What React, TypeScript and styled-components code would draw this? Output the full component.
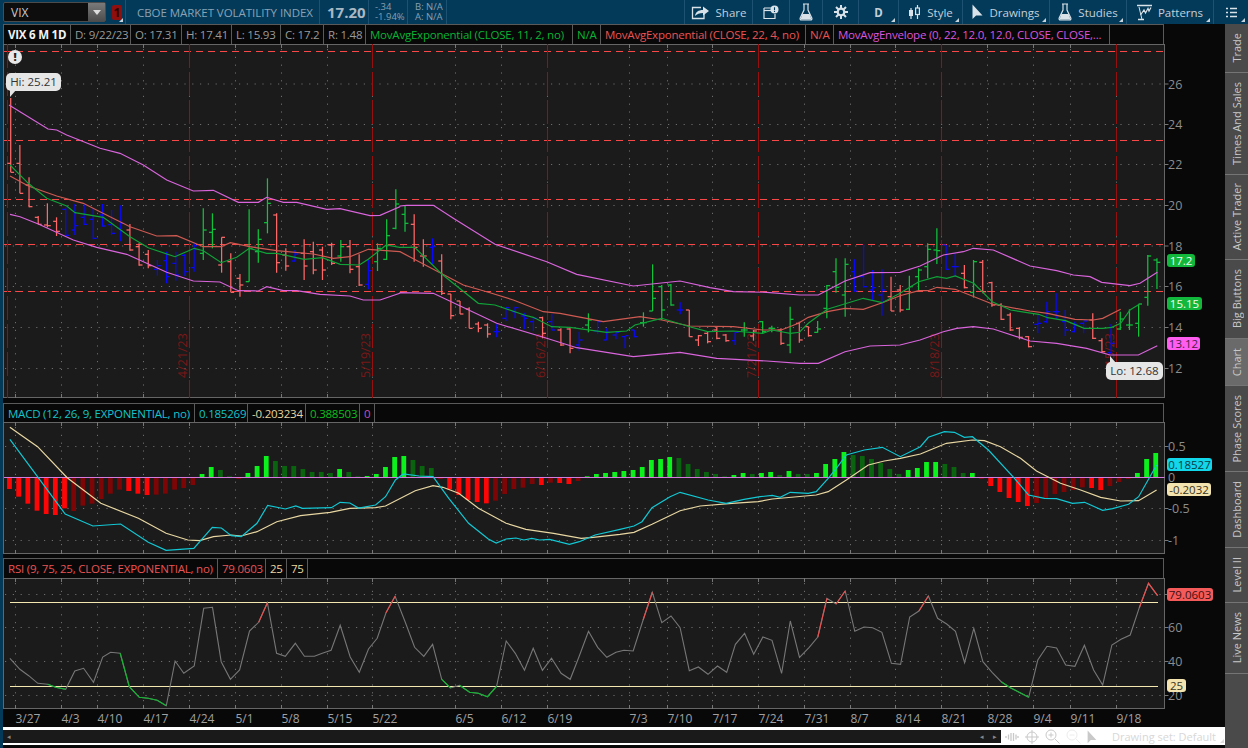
import React from "react";
import styled, { createGlobalStyle } from "styled-components";

const FONT = '"Open Sans", "Noto Sans", "Liberation Sans", sans-serif';

const Global = createGlobalStyle`
  html, body { margin: 0; padding: 0; background: #033a5a; overflow: hidden; }
  * { box-sizing: border-box; }
`;

const Page = styled.div`
  width: 1248px; height: 748px; display: flex; flex-direction: column;
  background: #033a5a; font-family: ${FONT}; font-size: 12px; color: #aaa; overflow: hidden;
`;
const TopBar = styled.header`
  height: 24px; display: flex; align-items: stretch; padding-left: 3px; flex: none; background: #033a5a;
`;
const SymbolBox = styled.div`
  width: 103px; height: 20px; margin-top: 2px; background: #0d0d0d; border: 1px solid #4c4c4c; border-radius: 2px;
  display: flex; align-items: center; justify-content: space-between; padding-left: 7px; color: #c9c9c9; font-size: 12px;
`;
const DropButton = styled.span`
  width: 17px; height: 18px; background: linear-gradient(#7a7a7a, #4d4d4d); display: flex; align-items: center; justify-content: center;
  &::after { content: ""; border-left: 4px solid transparent; border-right: 4px solid transparent; border-top: 5px solid #ddd; }
`;
const LinkCell = styled.div`
  width: 20px; position: relative; display: flex; align-items: center; padding-left: 6px; border-right: 1px solid #1d5273;
  &::after { content: ""; position: absolute; right: 2px; bottom: 2px; border-left: 4px solid transparent; border-bottom: 4px solid #c8d4dc; }
`;
const LinkBadge = styled.span`
  width: 10px; height: 15px; background: #8f0f0f; border-radius: 2px; color: #2a0505; font-size: 12px; font-weight: 700;
  display: flex; align-items: center; justify-content: center;
`;
const InfoCell = styled.div<{ $w: number; $pl: number }>`
  width: ${(p) => p.$w}px; padding-left: ${(p) => p.$pl}px; border-right: 1px solid #1d5273; display: flex; flex-direction: column; justify-content: center; flex: none; white-space: nowrap;
`;
const Description = styled.span`
  color: #8aa3b4; font-size: 11.5px; letter-spacing: -0.05px;
`;
const LastPrice = styled.span`
  color: #a9b8c2; font-size: 15px; font-weight: 700;
`;
const TinyLine = styled.span`
  color: #86a0b2; font-size: 9.5px; line-height: 10px;
`;
const Spacer = styled.div`
  flex: 1;
`;
const ToolButton = styled.div<{ $w: number; $corner?: boolean }>`
  width: ${(p) => p.$w}px; flex: none; position: relative; display: flex; align-items: center; justify-content: center; gap: 6px;
  border-left: 1px solid #1d5273; color: #c3d0d9; font-size: 11.5px; white-space: nowrap;
  ${(p) => p.$corner ? `&::after { content: ""; position: absolute; right: 3px; bottom: 2px; border-left: 4px solid transparent; border-bottom: 4px solid #c8d4dc; }` : ""}
`;
const ToolIcon = styled.svg`
  display: block; flex: none;
`;
const Body = styled.div`
  flex: 1; display: flex; padding-left: 3px; min-height: 0;
`;
const Workspace = styled.main`
  width: 1222px; flex: none; display: flex; flex-direction: column; background: #080808; position: relative;
`;
const PaneHeader = styled.div<{ $h: number; $mt: number }>`
  width: 1161px; height: ${(p) => p.$h}px; margin-top: ${(p) => p.$mt}px; flex: none; display: flex; align-items: stretch;
  background: #080808; border: 1px solid #5a5a5a; border-bottom: none;
`;
const LegendCell = styled.div<{ $w: number; $c: string; $bold?: boolean }>`
  width: ${(p) => p.$w}px; flex: none; padding-left: 4px; border-right: 1px solid #5a5a5a; color: ${(p) => p.$c};
  font-size: 11.5px; letter-spacing: -0.22px; font-weight: ${(p) => (p.$bold ? 700 : 400)}; display: flex; align-items: center; white-space: nowrap; overflow: hidden;
`;
const Plot = styled.svg`
  display: block; flex: none; font-family: ${FONT};
`;
const ScrollRow = styled.div`
  height: 18px; flex: none; display: flex; background: #fff; padding: 3px 0 2px;
`;
const ScrollTrack = styled.div`
  width: 998px; height: 13px; background: #1a1a1a; display: flex; align-items: center; justify-content: space-between; padding: 0 4px; color: #888; font-size: 7px;
`;
const ScrollArrows = styled.span`
  display: flex; gap: 9px;
`;
const StatusTools = styled.div`
  flex: 1; display: flex; align-items: center; gap: 6px; padding-left: 4px; position: relative;
  &::after { content: ""; position: absolute; right: 1px; bottom: 0; border-left: 4px solid transparent; border-bottom: 4px solid #ddd; }
`;
const StatusText = styled.span`
  margin-left: 9px; color: #d8d8d8; font-size: 11px; white-space: nowrap;
`;
const SideTabs = styled.nav`
  flex: 1; display: flex; flex-direction: column; background: #4a4a4a;
`;
const SideTab = styled.div<{ $h: number; $active?: boolean }>`
  height: ${(p) => p.$h}px; flex: none; display: flex; align-items: center; justify-content: center;
  background: ${(p) => (p.$active ? "#6a6a6a" : "#4a4a4a")}; border-bottom: 1px solid #757575; color: #c8c8c8; font-size: 11px;
`;
const SideLabel = styled.span`
  writing-mode: vertical-rl; transform: rotate(180deg); white-space: nowrap;
`;
const Badge = styled.div<{ $x: number; $y: number; $w: number; $bg: string; $c: string }>`
  position: absolute; left: ${(p) => p.$x - 3}px; top: ${(p) => p.$y - 24}px; width: ${(p) => p.$w}px; height: 13px; border-radius: 3px;
  background: ${(p) => p.$bg}; color: ${(p) => p.$c}; font-size: 11.5px; line-height: 13px; text-align: center;
`;
const Callout = styled.div<{ $x: number; $y: number; $w: number; $up?: boolean }>`
  position: absolute; left: ${(p) => p.$x - 3}px; top: ${(p) => p.$y - 24}px; width: ${(p) => p.$w}px; height: 18px; border-radius: 5px;
  background: #e6e6e6; color: #333; font-size: 11.5px; line-height: 18px; text-align: center;
  &::after {
    content: ""; position: absolute; left: 4px; ${(p) => (p.$up ? "top: -6px" : "bottom: -6px")};
    width: 6px; height: 7px; background: #e6e6e6;
    clip-path: ${(p) => (p.$up ? "polygon(0 100%, 100% 100%, 0 0)" : "polygon(0 0, 100% 0, 0 100%)")};
  }
`;
const Alert = styled.div`
  position: absolute; left: 5px; top: 26px; width: 14px; height: 14px; border-radius: 50%; background: #e8e8e8; color: #222;
  font-size: 11px; font-weight: 800; line-height: 14px; text-align: center;
`;

type P = [number, number];
const GREEN = "#10c23c", RED = "#ff6868", BLUE = "#0808ff";
const X = (i: number) => 10.7 + 9.17 * i;
const Y = (zy: number) => 130 + zy / 3;

// [top, bottom, left tick, right tick, colour] in the 3x crop's y units
const bars: [number, number, number, number, string][] = [
  [-96,127,100,127,RED],[45,190,100,190,RED],[142,232,165,230,RED],[258,283,262,283,RED],[220,292,285,287,RED],
  [262,318,274,304,RED],[232,318,238,316,BLUE],[222,315,300,287,BLUE],[222,285,262,283,BLUE],[235,328,268,325,BLUE],
  [222,290,255,288,BLUE],[240,315,284,310,BLUE],[226,334,295,280,BLUE],[282,362,300,360,RED],[340,407,350,405,RED],
  [360,415,373,407,RED],[390,437,418,407,BLUE],[365,460,392,440,BLUE],[365,452,400,435,BLUE],[372,438,376,425,BLUE],
  [338,425,413,347,BLUE],[235,390,370,300,GREEN],[250,355,307,298,GREEN],[322,428,405,322,RED],[370,487,395,487,RED],
  [432,500,445,465,RED],[238,455,455,355,GREEN],[298,398,365,328,GREEN],[145,310,278,220,GREEN],[250,428,255,398,RED],
  [355,422,375,408,RED],[360,395,393,372,BLUE],[328,450,370,408,RED],[335,433,365,420,RED],[350,450,360,420,RED],
  [338,405,345,400,RED],[330,395,378,350,GREEN],[330,430,350,418,RED],[373,468,410,465,RED],[390,478,463,422,BLUE],
  [340,423,395,355,GREEN],[268,390,388,317,GREEN],[178,298,295,222,GREEN],[228,305,253,280,GREEN],[253,395,283,352,RED],
  [328,410,378,378,RED],[325,403,352,350,BLUE],[373,495,393,490,RED],[492,568,492,557,RED],[513,552,513,552,RED],
  [532,595,537,595,RED],[575,607,582,595,RED],[580,623,585,612,RED],[583,622,605,605,BLUE],[530,573,565,533,BLUE],
  [530,565,545,533,BLUE],[548,598,558,565,BLUE],[563,603,575,565,BLUE],[560,625,563,610,RED],[552,600,575,600,BLUE],
  [595,648,600,645,RED],[595,670,597,655,RED],[605,662,645,630,BLUE],[550,607,585,570,GREEN],[573,612,603,575,BLUE],
  [595,630,630,607,BLUE],[603,628,615,607,BLUE],[617,655,620,617,BLUE],[600,622,600,620,BLUE],[547,590,578,578,GREEN],
  [403,543,543,505,GREEN],[465,570,470,540,GREEN],[462,527,465,525,GREEN],[517,553,540,540,BLUE],[540,620,540,620,RED],
  [615,648,630,617,RED],[605,640,610,635,RED],[590,628,600,625,RED],[612,635,615,632,RED],[605,645,632,607,BLUE],
  [577,620,600,600,GREEN],[600,632,618,603,RED],[573,610,575,605,GREEN],[587,607,595,595,GREEN],[595,645,600,640,RED],
  [530,670,645,568,GREEN],[575,638,580,630,RED],[590,620,590,617,RED],[573,608,607,597,GREEN],[465,565,535,467,GREEN],
  [385,488,425,472,GREEN],[385,560,495,403,GREEN],[388,485,425,483,BLUE],[342,473,440,470,BLUE],[420,510,480,473,BLUE],
  [418,557,495,480,BLUE],[440,543,500,543,RED],[465,547,480,540,RED],[437,540,538,470,GREEN],[415,480,440,420,GREEN],
  [340,445,410,358,GREEN],[295,402,360,362,GREEN],[345,418,345,418,BLUE],[370,440,410,410,BLUE],[405,475,430,473,RED],
  [390,503,487,395,GREEN],[390,490,397,485,RED],[455,530,458,525,RED],[520,570,525,568,RED],[548,603,555,600,RED],
  [592,628,595,622,RED],[618,652,620,650,RED],[555,610,583,580,BLUE],[515,580,575,545,BLUE],[490,567,545,545,BLUE],
  [540,618,575,600,BLUE],[575,607,605,583,BLUE],[575,610,580,573,BLUE],[550,627,570,625,RED],[625,668,632,665,RED],
  [582,672,668,640,BLUE],[545,600,597,567,GREEN],[538,600,585,585,GREEN],[522,620,580,522,GREEN],[375,527,502,378,GREEN],
  [385,477,390,397,GREEN],
];

const main = (ox: number, pts: number[]): P[] => {
  const o: P[] = [];
  for (let i = 0; i < pts.length; i += 2) o.push([ox + pts[i] / 3, Y(pts[i + 1])]);
  return o;
};
const line = (pts: P[]) => pts.map((p) => p[0].toFixed(1) + "," + p[1].toFixed(1)).join(" ");

const upper = [
  ...main(0, [27,-75,144,-3,170,0,200,15,300,55,360,70,430,105,500,150,580,183,640,181,715,217,775,217,800,202,850,217,890,217,980,238,1020,236,1110,257,1140,256,1199,230]),
  ...main(400, [0,228,20,226,100,226,160,265,285,343,440,395,530,433,700,468,840,453,930,473,1000,485,1100,487,1199,495]),
  ...main(800, [0,495,55,495,135,453,210,428,300,427,360,408,430,375,490,365,520,355,580,360,690,408,770,422,820,435,870,440,905,457,990,467,1020,460,1072,427]),
];
const lower = [
  ...main(0, [30,253,60,260,115,282,220,330,290,352,380,373,500,427,580,453,660,456,715,482,775,483,800,470,850,482,890,482,960,493,1050,498,1090,510,1140,510,1199,490]),
  ...main(400, [0,488,100,490,290,580,440,625,530,653,700,680,840,667,950,685,1100,693,1199,700]),
  ...main(800, [0,700,55,700,135,665,210,648,300,645,360,630,430,605,470,595,520,590,580,597,690,633,770,640,860,655,930,675,1015,675,1072,647]),
];
const emaFast = [
  ...main(0, [30,105,85,160,140,205,200,228,225,248,310,262,390,320,445,353,525,380,583,355,610,362,664,398,710,382,748,355,800,370,830,370,913,388,967,383,1021,403,1078,405,1105,388,1159,345,1199,352]),
  ...main(400, [0,352,44,352,125,432,235,520,285,525,373,555,400,562,455,590,510,592,620,607,680,603,705,585,785,565,869,590,923,605,1000,603,1088,610,1116,600,1171,610,1199,607]),
  ...main(800, [0,605,25,580,82,538,190,505,247,518,300,490,356,455,411,440,440,445,466,438,521,460,577,515,632,540,716,553,743,563,797,572,853,595,908,595,935,592,962,580,990,540,1018,523]),
];
const emaSlow = [
  ...main(0, [30,138,85,168,170,198,250,220,300,245,390,290,470,318,530,317,610,350,664,350,691,338,750,350,830,362,940,372,1000,385,1050,380,1105,358,1199,365]),
  ...main(400, [0,365,100,418,190,465,270,488,340,510,430,545,480,550,610,575,720,560,785,570,869,588,1000,590,1088,600,1144,600,1199,578]),
  ...main(800, [0,577,25,562,82,545,135,535,190,538,247,518,300,497,356,482,384,482,411,472,466,478,577,522,690,543,743,550,825,568,880,570,908,565,962,538]),
];

const TICKS = [15,61,97,143,189,235,281,327,372,455,501,547,629,667,712,758,804,850,895,941,987,1033,1070,1116];
const EVENTS = [7,189,372,547,758,941,1116];
const DATES: [string, number][] = [["3/27",15],["4/3",61],["4/10",97],["4/17",143],["4/24",189],["5/1",235],["5/8",281],["5/15",327],["5/22",372],["6/5",455],["6/12",501],["6/19",547],["7/3",629],["7/10",667],["7/17",712],["7/24",758],["7/31",804],["8/7",850],["8/14",895],["8/21",941],["8/28",987],["9/4",1033],["9/11",1070],["9/18",1116]];
const R = 1164.5;
const GRID = "#6c6c6c";

const Frame = ({ top, bottom, rows }: { top: number; bottom: number; rows: number[] }) => (
  <>
    <rect x={3.5} y={top + 0.5} width={R - 3.5} height={bottom - top - 1} fill="#1b1b1b" stroke="#666" />
    {rows.map((y) => (
      <g key={y}>
        <line x1={5} x2={R} y1={y} y2={y} stroke={GRID} strokeDasharray="1.2 6.6" />
        <line x1={R} x2={R + 4} y1={y} y2={y} stroke="#777" />
      </g>
    ))}
    {TICKS.map((x) => (
      <g key={x} stroke="#777">
        <line x1={x + 0.5} x2={x + 0.5} y1={top + 5} y2={bottom - 5} stroke={GRID} strokeDasharray="1.2 6.6" />
        <line x1={x + 0.5} x2={x + 0.5} y1={top} y2={top + 4} />
        <line x1={x + 0.5} x2={x + 0.5} y1={bottom - 4} y2={bottom} />
      </g>
    ))}
  </>
);

const AxisLabels = ({ items }: { items: [string, number][] }) => (
  <>
    {items.map(([t, y]) => (
      <text key={t} x={1168} y={y + 4.5} fill="#8c8c8c" fontSize={12.5}>{t}</text>
    ))}
  </>
);

const MainChart = () => (
  <Plot width={1222} height={354} viewBox="3 44 1222 354">
    <Frame top={44} bottom={398} rows={[84,124.5,164.5,205.5,246,286.5,327.5,368.5]} />
    {[51.5,140.5,199.5,244.5,291.5].map((y) => (
      <line key={y} x1={4} x2={R} y1={y} y2={y} stroke="#f84848" strokeWidth={1.1} strokeDasharray="7 5" />
    ))}
    {EVENTS.map((x) => (
      <line key={x} x1={x + 0.5} x2={x + 0.5} y1={44} y2={398} stroke="#961010" strokeWidth={1.1} strokeDasharray="24 4" />
    ))}
    {[["4/21/23",187,378],["5/19/23",370,378],["6/16/23",545,378],["7/21/23",756,378],["8/18/23",939,378],["9/15/23",1114,378]].map(([t,x,y]) => (
      <text key={t as string} x={x as number} y={y as number} transform={`rotate(-90 ${x} ${y})`} fill="#781818" fontSize={12.5}>{t}</text>
    ))}
    {bars.map(([t, b, l, r, c], i) => {
      const x = X(i);
      return (
        <g key={i} stroke={c} strokeWidth={1.25}>
          <line x1={x} x2={x} y1={Y(t)} y2={Y(b)} />
          <line x1={x - 3.4} x2={x} y1={Y(l)} y2={Y(l)} />
          <line x1={x} x2={x + 3.4} y1={Y(r)} y2={Y(r)} />
        </g>
      );
    })}
    <polyline points={line(upper)} fill="none" stroke="#d964dc" strokeWidth={1.2} />
    <polyline points={line(lower)} fill="none" stroke="#d964dc" strokeWidth={1.2} />
    <polyline points={line(emaSlow)} fill="none" stroke="#cf5a52" strokeWidth={1.2} />
    <polyline points={line(emaFast)} fill="none" stroke="#10a238" strokeWidth={1.2} />
    <AxisLabels items={[["26",84],["24",124.5],["22",164.5],["20",205.5],["18",246],["16",286.5],["14",327.5],["12",368.5]]} />
    <g stroke="#f2f2f2" strokeWidth={1.4} fill="none" transform="translate(0 -24)">
      <path d="M1170.5 51h14.5M1170.5 65.5h14.5" />
      <path d="M1171 62c4 0 4-8 7.5-8s3 0 6 0" />
    </g>
  </Plot>
);

const histZero = 232;
const G1 = "#0cf01c", G2 = "#0a640f", R1 = "#ff0606", R2 = "#7d0505";
const hist: [number, number][] = [
  [267,1],[290,1],[311,1],[332,1],[342,1],[345,1],[325,1],[333,0],[317,0],[311,0],[297,0],[281,0],[269,0],[273,1],[281,1],[285,1],[284,0],[281,0],[269,0],[264,0],[255,0],
  [222,1],[201,1],[210,0],[229,0],[237,0],[219,1],[198,1],[168,1],[183,0],[198,0],[198,0],[207,0],[216,0],[216,0],[219,0],[207,1],[216,0],[229,0],[228,1],[222,1],[201,1],[171,1],[168,1],[180,0],[198,0],[204,0],
  [237,0],[268,1],[285,1],[300,1],[306,1],[310,1],[302,0],[282,0],[267,0],[263,0],[252,0],[255,1],[248,0],[249,1],[252,1],[243,0],
  [229,1],[222,1],[219,1],[216,1],[213,1],[210,1],[201,1],[180,1],[177,1],[171,1],[174,0],[192,0],[207,0],[216,0],[222,0],[229,0],[225,1],[219,1],[222,0],[219,1],[216,1],[225,0],[213,1],[222,0],[222,0],[219,1],[192,1],[177,1],[156,1],[165,0],[168,0],[177,0],[189,0],[207,0],[222,0],
  [210,1],[204,1],[186,1],[186,1],[192,0],[201,0],[219,0],[219,1],[237,0],[258,1],[276,1],[294,1],[306,1],[318,1],[309,0],[294,0],[282,0],[276,0],[270,0],[262,0],[264,1],[270,1],[258,0],[246,0],[237,0],[219,1],[177,1],[159,1],
];
const mz = (ox: number, sx: number, pts: number[]): P[] => {
  const o: P[] = [];
  for (let i = 0; i < pts.length; i += 2) o.push([ox + pts[i] / sx, 400 + pts[i + 1] / 3]);
  return o;
};
const macd = [
  ...mz(0, 2.529, [25,118,165,342,235,378,305,372,375,427,420,451,490,445,537,382,560,384,585,407,610,410,650,370,677,316,722,327,748,318,765,325,838,323,860,307,885,309,907,324,950,315,975,290,1000,240,1020,222,1060,228,1095,230,1135,295,1185,370,1235,417,1255,429,1280,417,1305,414,1325,420,1345,415,1365,420,1390,418,1440,433,1465,425,1505,405,1568,388]),
  ...mz(620, 2.497, [0,388,35,378,55,365,80,323,125,290,150,277,220,300,265,310,310,298,350,290,380,286,400,292,425,277,470,280,490,275,520,235,540,205,565,165,610,150,655,142,700,170,750,140,770,112,810,95,835,97,860,112,880,110,920,150,985,235,1020,285,1060,295,1090,296,1130,310,1160,307,1205,331,1230,326,1270,313,1295,290,1340,195]),
];
const signal = [
  ...mz(0, 2.529, [25,82,50,103,95,140,170,233,255,310,350,355,420,400,475,420,505,422,540,410,585,405,610,408,650,395,700,365,760,347,835,337,885,325,950,323,975,318,1050,272,1095,257,1120,262,1160,280,1210,325,1280,370,1330,388,1400,400,1470,415,1500,412,1568,403]),
  ...mz(620, 2.497, [0,403,35,397,80,373,150,332,200,318,280,310,345,305,380,297,490,285,520,275,565,240,620,195,660,183,700,175,750,162,815,130,880,120,910,122,950,140,1000,175,1040,213,1100,250,1150,270,1200,292,1250,303,1295,302,1340,270]),
];

const MacdChart = () => (
  <Plot width={1222} height={132} viewBox="3 422 1222 132">
    <Frame top={422} bottom={554} rows={[446.5,508.5,540.5]} />
    {hist.map(([zy, s], i) => {
      const x = 9.5 + 9.17 * i;
      const up = zy < histZero;
      const y1 = 400 + Math.min(zy, histZero) / 3;
      const h = Math.abs(zy - histZero) / 3;
      return <rect key={i} x={x - 2.4} y={y1} width={4.8} height={h} fill={up ? (s ? G1 : G2) : s ? R1 : R2} />;
    })}
    <line x1={4} x2={R} y1={477.5} y2={477.5} stroke="#d77adf" />
    <polyline points={line(signal)} fill="none" stroke="#e8d7a2" strokeWidth={1.2} />
    <polyline points={line(macd)} fill="none" stroke="#12c8d4" strokeWidth={1.2} />
    <AxisLabels items={[["0.5",446.5],["0",477.5],["-0.5",508.5],["-1",540.5]]} />
  </Plot>
);

const rz = (ox: number, pts: number[]): P[] => {
  const o: P[] = [];
  for (let i = 0; i < pts.length; i += 2) o.push([ox + pts[i] / 2.513, 555 + pts[i + 1] / 3]);
  return o;
};
const rsiA = rz(0, [25,310,50,343,72,362,95,385,120,388,140,397,165,403,188,348,210,340,235,382,258,306,278,292,302,295,325,395,350,427,372,430,395,436,418,452,440,318,462,355,488,333,512,160,534,157,556,320,579,373,602,345,627,228,650,202,672,143,695,295,717,304,742,265,765,304,790,304,810,295,832,286,855,211,880,306,903,352,926,282,948,250,970,173,993,124,1018,200,1042,277,1065,304,1087,268,1110,373,1132,399,1155,391,1180,412,1202,415,1225,425,1248,394,1272,258,1295,295,1318,346,1340,280,1363,346,1386,310,1410,355,1433,373,1455,305,1479,229,1502,277,1525,307,1548,292]);
const rsiB = rz(624, [0,286,23,288,48,195,71,112,95,203,118,183,141,218,164,347,187,336,211,358,235,333,258,352,280,268,303,235,326,298,349,246,372,256,396,355,418,198,441,307,465,278,487,246,510,130,533,147,556,108,580,229,603,216,625,218,648,232,672,325,695,328,718,186,741,168,765,123,788,190,811,207,833,229,856,323,879,220,902,320,925,352,948,380,971,398,993,412,1017,427,1040,315,1063,274,1087,279,1110,330,1133,334,1157,271,1180,345,1203,390,1226,270,1249,253,1272,240,1295,158,1318,85,1341,122]);
const rsi = [...rsiA, ...rsiB];
const GREEN_SEG = [[4,6],[12,17],[47,48],[49,53],[108,111]];
const RED_SEG = [[27,28],[41,42],[69,70],[88,89],[90,91],[99,100],[123,125]];
const segs = (l: number[][]) => l.map(([a, b]) => rsi.slice(a, b + 1));

const RsiChart = () => (
  <Plot width={1222} height={131} viewBox="3 578 1222 131">
    <Frame top={578} bottom={709} rows={[594.5,627.5,661.5,695.5]} />
    <line x1={10} x2={1158} y1={602.5} y2={602.5} stroke="#f5e8b0" strokeWidth={1.2} />
    <line x1={10} x2={1158} y1={686.5} y2={686.5} stroke="#f5e8b0" strokeWidth={1.2} />
    <polyline points={line(rsi)} fill="none" stroke="#777" strokeWidth={1.1} />
    {segs(GREEN_SEG).map((s, i) => <polyline key={i} points={line(s)} fill="none" stroke="#0fb82f" strokeWidth={1.15} />)}
    {segs(RED_SEG).map((s, i) => <polyline key={i} points={line(s)} fill="none" stroke="#e85050" strokeWidth={1.15} />)}
    <AxisLabels items={[["60",627.5],["40",661.5],["20",695.5]]} />
  </Plot>
);

const DateAxis = () => (
  <Plot width={1222} height={18} viewBox="3 709 1222 18">
    {DATES.map(([t, x]) => (
      <text key={t} x={x + 0.5} y={723} fill="#a0a0a0" fontSize={12}>{t}</text>
    ))}
  </Plot>
);

const Ic = "#d9e2e8";
const ShareIcon = () => (
  <ToolIcon width="19" height="15" viewBox="0 0 19 15">
    <path d="M10 2.5H1.5v11H13V9" fill="none" stroke={Ic} strokeWidth={1.3} />
    <path d="M4 11c.5-4 3.5-6 8-6V1.5L18 6l-6 4.5V8C8.5 8 6 9 4 11z" fill={Ic} />
  </ToolIcon>
);
const MailIcon = () => (
  <ToolIcon width="16" height="15" viewBox="0 0 16 15">
    <path d="M1 3h9v0M1 3v10.5h11V9" fill="none" stroke={Ic} strokeWidth={1.2} />
    <path d="M1 5.5h7" stroke={Ic} strokeWidth={1.2} />
    <circle cx={11.5} cy={4.5} r={4} fill={Ic} />
    <path d="M11.5 2.2v3M11.5 6v.9" stroke="#033a5a" strokeWidth={1.1} />
  </ToolIcon>
);
const FlaskIcon = () => (
  <ToolIcon width="14" height="18" viewBox="0 0 14 18">
    <path d="M4 1h6M5 1v6L1.2 15c-.4 1 .1 2 1.2 2h9.2c1.1 0 1.6-1 1.2-2L9 7V1" fill="none" stroke={Ic} strokeWidth={1.2} />
    <path d="M3.4 11h7.2l2 5.5H1.4z" fill={Ic} />
  </ToolIcon>
);
const GearIcon = () => (
  <ToolIcon width="14" height="14" viewBox="0 0 14 14">
    <g stroke={Ic} strokeWidth={2}>
      <path d="M7 0v14M0 7h14M2 2l10 10M12 2L2 12" />
    </g>
    <circle cx={7} cy={7} r={4.4} fill={Ic} />
    <circle cx={7} cy={7} r={2.2} fill="#033a5a" />
  </ToolIcon>
);
const CandleIcon = () => (
  <ToolIcon width="13" height="17" viewBox="0 0 13 17">
    <path d="M3 4v11M9.5 1v14" stroke={Ic} strokeWidth={1.2} />
    <rect x={1} y={6} width={4} height={6} fill={Ic} />
    <rect x={7.6} y={4} width={3.8} height={6.5} fill="#033a5a" stroke={Ic} strokeWidth={1.2} />
  </ToolIcon>
);
const CursorIcon = () => (
  <ToolIcon width="11" height="16" viewBox="0 0 11 16">
    <path d="M0.5 0.5V15l3.6-3.5h6.4z" fill={Ic} />
  </ToolIcon>
);
const PatternIcon = () => (
  <ToolIcon width="15" height="17" viewBox="0 0 15 17">
    <path d="M0 1.5h15M1 15.5h6" stroke={Ic} strokeWidth={1.3} />
    <path d="M2 3l3 12.5" stroke={Ic} strokeWidth={1} />
    <path d="M3.5 11l3.5-5 1.5 3 2.5-4.5 1 2.5L14 3.5" fill="none" stroke={Ic} strokeWidth={1.2} />
  </ToolIcon>
);
const ListIcon = () => (
  <ToolIcon width="11" height="11" viewBox="0 0 11 11">
    <path d="M0 1.5h2M4 1.5h7M0 5.5h2M4 5.5h7M0 9.5h2M4 9.5h7" stroke={Ic} strokeWidth={1.5} />
  </ToolIcon>
);

const Faint = "#c9c9c9";
const StatusIcons = () => (
  <>
    <ToolIcon width="14" height="10" viewBox="0 0 14 10"><path d="M1 4v2M3.5 2.5v5M6 1v8M8.5 1v8M11 2.5v5M13 4v2" stroke={Faint} strokeWidth={1.3} /></ToolIcon>
    <ToolIcon width="14" height="14" viewBox="0 0 14 14"><circle cx={7} cy={7} r={5} fill="none" stroke={Faint} /><path d="M7 0v14M0 7h14" stroke={Faint} /></ToolIcon>
    <ToolIcon width="15" height="15" viewBox="0 0 15 15"><circle cx={6} cy={6} r={5} fill="none" stroke={Faint} /><path d="M10 10l4.5 4.5M3.5 6h5M6 3.5v5" stroke={Faint} /></ToolIcon>
    <ToolIcon width="15" height="15" viewBox="0 0 15 15"><circle cx={6} cy={6} r={5} fill="none" stroke="#ececec" /><path d="M10 10l4.5 4.5M3.5 6h5" stroke="#ececec" /></ToolIcon>
    <ToolIcon width="10" height="14" viewBox="0 0 11 16"><path d="M0.5 0.5V15l3.6-3.5h6.4z" fill={Faint} /></ToolIcon>
  </>
);

const TABS: [string, number][] = [["Trade",49],["Times And Sales",102],["Active Trader",85],["Big Buttons",79],["Chart",47],["Phase Scores",86],["Dashboard",76],["Level II",55],["Live News",71]];

const Legend = ({ items, h, mt }: { items: [string, number, string, boolean?][]; h: number; mt: number }) => (
  <PaneHeader $h={h} $mt={mt}>
    {items.map(([t, w, c, b], i) => (
      <LegendCell key={i} $w={w} $c={c} $bold={b}>{t}</LegendCell>
    ))}
  </PaneHeader>
);

const TXT = "#9a9a9a", LG = "#08b436", LR = "#e85454", LM = "#da55dc", BG = "#e8d7a2";

export default function App() {
  return (
    <Page>
      <Global />
      <TopBar>
        <SymbolBox>VIX<DropButton /></SymbolBox>
        <LinkCell><LinkBadge>1</LinkBadge></LinkCell>
        <InfoCell $w={194} $pl={11}><Description>CBOE MARKET VOLATILITY INDEX</Description></InfoCell>
        <InfoCell $w={49} $pl={7}><LastPrice>17.20</LastPrice></InfoCell>
        <InfoCell $w={39} $pl={6}><TinyLine>-.34</TinyLine><TinyLine>-1.94%</TinyLine></InfoCell>
        <InfoCell $w={39} $pl={7}><TinyLine>B: N/A</TinyLine><TinyLine>A: N/A</TinyLine></InfoCell>
        <Spacer />
        <ToolButton $w={68}><ShareIcon />Share</ToolButton>
        <ToolButton $w={37}><MailIcon /></ToolButton>
        <ToolButton $w={33}><FlaskIcon /></ToolButton>
        <ToolButton $w={36}><GearIcon /></ToolButton>
        <ToolButton $w={40} $corner><b>D</b></ToolButton>
        <ToolButton $w={64} $corner><CandleIcon />Style</ToolButton>
        <ToolButton $w={87} $corner><CursorIcon />Drawings</ToolButton>
        <ToolButton $w={77} $corner><FlaskIcon />Studies</ToolButton>
        <ToolButton $w={87} $corner><PatternIcon />Patterns</ToolButton>
        <ToolButton $w={35} $corner><ListIcon /></ToolButton>
      </TopBar>
      <Body>
        <Workspace>
          <Legend h={20} mt={0} items={[
            ["VIX 6 M 1D",67,"#f2f2f2",true],["D: 9/22/23",60,TXT],["O: 17.31",51,TXT],["H: 17.41",50,TXT],["L: 15.93",49,TXT],["C: 17.2",43,TXT],["R: 1.48",42,TXT],
            ["MovAvgExponential (CLOSE, 11, 2, no)",207,LG],["N/A",28,LG],["MovAvgExponential (CLOSE, 22, 4, no)",205,LR],["N/A",28,LR],["MovAvgEnvelope (0, 22, 12.0, 12.0, CLOSE, CLOSE,...",276,LM],
          ]} />
          <MainChart />
          <Legend h={19} mt={5} items={[
            ["MACD (12, 26, 9, EXPONENTIAL, no)",191,"#14c4cc"],["0.185269",53,"#14c4cc"],["-0.203234",58,BG],["0.388503",54,"#0cc01c"],["0",15,"#c050c0"],
          ]} />
          <MacdChart />
          <Legend h={20} mt={4} items={[
            ["RSI (9, 75, 25, CLOSE, EXPONENTIAL, no)",214,LR],["79.0603",48,LR],["25",21,BG],["75",21,BG],
          ]} />
          <RsiChart />
          <DateAxis />
          <ScrollRow>
            <ScrollTrack>
              <span>◂</span>
              <ScrollArrows><span>◂</span><span>▸</span></ScrollArrows>
            </ScrollTrack>
            <StatusTools>
              <StatusIcons />
              <StatusText>Drawing set: Default</StatusText>
            </StatusTools>
          </ScrollRow>
          <Alert>!</Alert>
          <Callout $x={6} $y={73} $w={55}>Hi: 25.21</Callout>
          <Callout $x={1106} $y={362} $w={57} $up>Lo: 12.68</Callout>
          <Badge $x={1167} $y={254} $w={28} $bg="#12b83c" $c="#f0fff0">17.2</Badge>
          <Badge $x={1167} $y={297} $w={35} $bg="#12b83c" $c="#f0fff0">15.15</Badge>
          <Badge $x={1167} $y={337} $w={33} $bg="#ff5cf0" $c="#4a2044">13.12</Badge>
          <Badge $x={1167} $y={458} $w={45} $bg="#12d6ea" $c="#0a3a40">0.18527</Badge>
          <Badge $x={1167} $y={483} $w={44} $bg="#f3e3ae" $c="#3a3520">-0.2032</Badge>
          <Badge $x={1167} $y={588} $w={46} $bg="#f45a5a" $c="#401010">79.0603</Badge>
          <Badge $x={1167} $y={679} $w={19} $bg="#f3e3ae" $c="#3a3520">25</Badge>
        </Workspace>
        <SideTabs>
          {TABS.map(([t, h]) => (
            <SideTab key={t} $h={h} $active={t === "Chart"}><SideLabel>{t}</SideLabel></SideTab>
          ))}
        </SideTabs>
      </Body>
    </Page>
  );
}
